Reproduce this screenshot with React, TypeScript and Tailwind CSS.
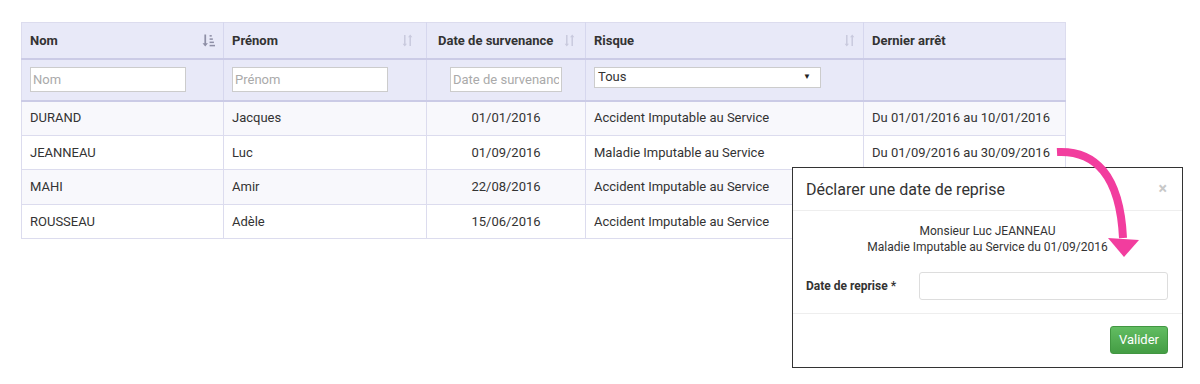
import React from 'react';

interface Row {
  nom: string;
  prenom: string;
  date: string;
  risque: string;
  arret: string;
}

const rows: Row[] = [
  { nom: 'DURAND', prenom: 'Jacques', date: '01/01/2016', risque: 'Accident Imputable au Service', arret: 'Du 01/01/2016 au 10/01/2016' },
  { nom: 'JEANNEAU', prenom: 'Luc', date: '01/09/2016', risque: 'Maladie Imputable au Service', arret: 'Du 01/09/2016 au 30/09/2016' },
  { nom: 'MAHI', prenom: 'Amir', date: '22/08/2016', risque: 'Accident Imputable au Service', arret: '' },
  { nom: 'ROUSSEAU', prenom: 'Adèle', date: '15/06/2016', risque: 'Accident Imputable au Service', arret: '' },
];

const SortIcon = () => (
  <svg width="11" height="13" viewBox="0 0 10 12" className="text-[#c9cade]">
    <path d="M2.5 11.5 L0.5 9 H1.8 V1 H3.2 V9 H4.5 Z" fill="currentColor" />
    <path d="M7.5 0.5 L9.5 3 H8.2 V11 H6.8 V3 H5.5 Z" fill="currentColor" />
  </svg>
);

const SortAscIcon = () => (
  <svg width="13" height="13" viewBox="0 0 12 12" className="text-[#8e8fa6]">
    <path d="M3 11.5 L0.5 8.5 H2.2 V0.5 H3.8 V8.5 H5.5 Z" fill="currentColor" />
    <rect x="7" y="1" width="2" height="1.4" fill="currentColor" />
    <rect x="7" y="4" width="3" height="1.4" fill="currentColor" />
    <rect x="7" y="7" width="4" height="1.4" fill="currentColor" />
    <rect x="7" y="10" width="5" height="1.4" fill="currentColor" />
  </svg>
);

const App = () => {
  return (
    <div className="relative w-[1200px] h-[384px] bg-white text-[13px] text-[#333]" style={{ fontFamily: 'Roboto, "Liberation Sans", sans-serif' }}>
      <div className="pt-[22px] pl-[21px]">
        <table className="border-collapse table-fixed w-[1044px] border border-[#dcdcee]">
          <colgroup>
            <col className="w-[202px]" />
            <col className="w-[203px]" />
            <col className="w-[159px]" />
            <col className="w-[278px]" />
            <col className="w-[202px]" />
          </colgroup>
          <thead>
            {/* Header */}
            <tr className="bg-[#e8e9f8] h-[36px] border-b-2 border-[#cbcbe6]">
              <th className="border-r border-[#d6d7ee] px-2 text-left font-bold">
                <div className="flex items-center justify-between">
                  <span>Nom</span>
                  <SortAscIcon />
                </div>
              </th>
              <th className="border-r border-[#d6d7ee] px-2 text-left font-bold">
                <div className="flex items-center justify-between pr-[5px]">
                  <span>Prénom</span>
                  <SortIcon />
                </div>
              </th>
              <th className="border-r border-[#d6d7ee] px-2 text-left font-bold">
                <div className="flex items-center justify-between pl-[3px] pr-[2px]">
                  <span>Date de survenance</span>
                  <SortIcon />
                </div>
              </th>
              <th className="border-r border-[#d6d7ee] px-2 text-left font-bold">
                <div className="flex items-center justify-between">
                  <span>Risque</span>
                  <SortIcon />
                </div>
              </th>
              <th className="px-2 text-left font-bold">Dernier arrêt</th>
            </tr>
            {/* Filters */}
            <tr className="bg-[#e8e9f8] h-[42px] border-b-2 border-[#cbcbe6]">
              <td className="border-r border-[#d6d7ee] px-2">
                <input placeholder="Nom" className="w-[156px] h-[25px] border border-[#ccc] bg-white px-[2px] text-[13px] placeholder:text-[#aaa] outline-none" />
              </td>
              <td className="border-r border-[#d6d7ee] px-2">
                <input placeholder="Prénom" className="w-[156px] h-[25px] border border-[#ccc] bg-white px-[2px] text-[13px] placeholder:text-[#aaa] outline-none" />
              </td>
              <td className="border-r border-[#d6d7ee] px-2 text-center">
                <input placeholder="Date de survenance" className="w-[112px] h-[25px] border border-[#ccc] bg-white px-[2px] text-[13px] placeholder:text-[#aaa] outline-none" />
              </td>
              <td className="border-r border-[#d6d7ee] px-2 align-top pt-[7px]">
                <div className="w-[227px] h-[21px] border border-[#ccc] bg-white flex items-center justify-between pl-[3px] pr-[9px]">
                  <span>Tous</span>
                  <span className="text-[8px] text-[#222]">▼</span>
                </div>
              </td>
              <td className="px-2"></td>
            </tr>
          </thead>
          <tbody>
            {rows.map((r, i) => (
              <tr key={r.nom} className={`h-[34.5px] border-b border-[#dcdcee] ${i % 2 === 0 ? 'bg-[#f8f8fc]' : 'bg-white'}`}>
                <td className="border-r border-[#dcdcee] px-2">{r.nom}</td>
                <td className="border-r border-[#dcdcee] px-2">{r.prenom}</td>
                <td className="border-r border-[#dcdcee] px-2 text-center">{r.date}</td>
                <td className="border-r border-[#dcdcee] px-2">{r.risque}</td>
                <td className="px-2">{r.arret}</td>
              </tr>
            ))}
          </tbody>
        </table>
      </div>

      {/* Modal */}
      <div className="absolute left-[792px] top-[167px] w-[391px] h-[201px] bg-white border border-[#333] flex flex-col">
        <div className="h-[43px] flex items-center justify-between pl-[13px] pr-[15px] border-b border-[#eee]">
          <span className="text-[16px] text-[#333] pt-[2px]">Déclarer une date de reprise</span>
          <span className="text-[16px] text-[#c8c8c8] font-bold leading-none">×</span>
        </div>
        <div className="pt-[12px] text-center text-[12px] leading-[16px] text-[#333]">
          <div>Monsieur Luc JEANNEAU</div>
          <div>Maladie Imputable au Service du 01/09/2016</div>
        </div>
        <div className="flex items-center pl-[13px] pr-[14px] pt-[17px] pb-[13px] border-b border-[#eee]">
          <span className="w-[113px] font-bold text-[12px]">Date de reprise *</span>
          <div className="flex-1 h-[28px] border border-[#ddd] rounded-[3px]"></div>
        </div>
        <div className="flex justify-end pr-[14px] pt-[12px]">
          <button className="h-[28px] px-[8px] rounded-[3px] text-white text-[13px] bg-gradient-to-b from-[#62bd62] to-[#449d44] border border-[#419641]">Valider</button>
        </div>
      </div>

      {/* Arrow */}
      <svg className="absolute left-0 top-0 pointer-events-none" width="1200" height="384">
        <path d="M1057 152 C1095 150 1120 175 1123 238" fill="none" stroke="#f23d9e" strokeWidth="8" />
        <path d="M1108 238 L1139 240 L1124 257 Z" fill="#f23d9e" />
      </svg>
    </div>
  );
};

export default App;
